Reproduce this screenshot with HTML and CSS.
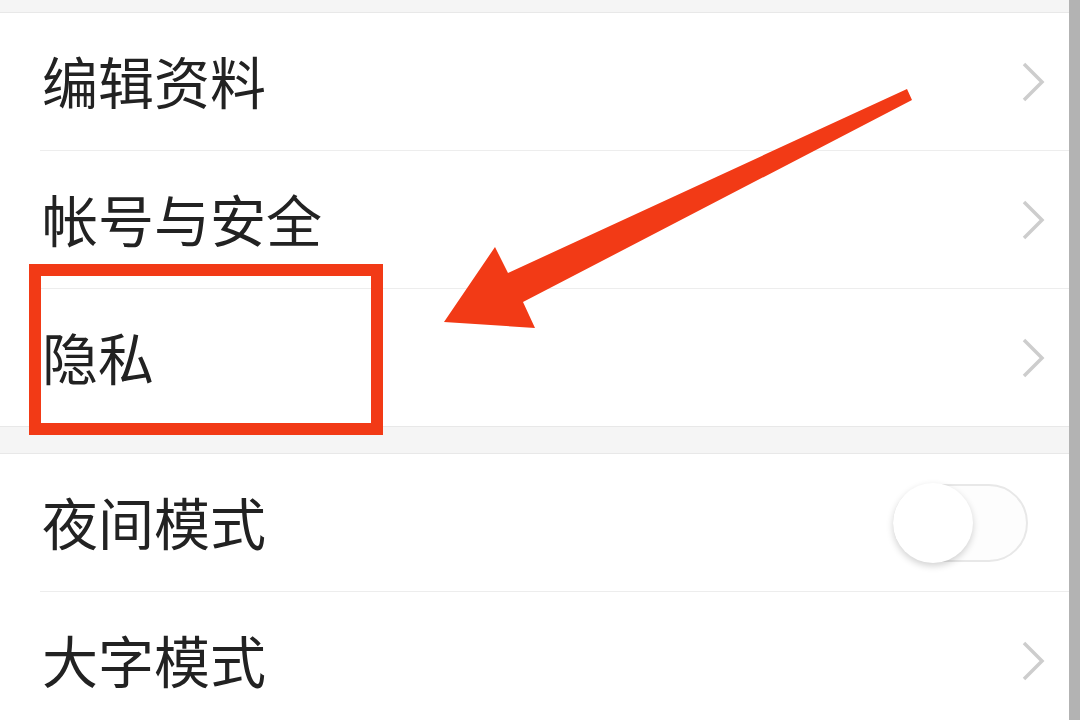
FILE: index.html
```html
<!DOCTYPE html>
<html lang="zh-CN">

<head>
    <meta charset="UTF-8">
    <meta name="viewport" content="width=device-width, initial-scale=1.0">
    <title>设置</title>
    <link rel="stylesheet" href="styles.css">
</head>

<body>
    <div id="screen">
        <div class="page">
            <div class="top-gap"></div>
            <div class="group">
                <div class="row">
                    <span class="label">编辑资料</span>
                    <svg class="chevron" viewBox="0 0 24 40"><polyline points="3,2 21,20 3,38" /></svg>
                </div>
                <div class="row">
                    <span class="label">帐号与安全</span>
                    <svg class="chevron" viewBox="0 0 24 40"><polyline points="3,2 21,20 3,38" /></svg>
                </div>
                <div class="row">
                    <span class="label">隐私</span>
                    <svg class="chevron" viewBox="0 0 24 40"><polyline points="3,2 21,20 3,38" /></svg>
                </div>
            </div>
            <div class="section-gap"></div>
            <div class="group">
                <div class="row">
                    <span class="label">夜间模式</span>
                    <span class="switch"><span class="knob"></span></span>
                </div>
                <div class="row">
                    <span class="label">大字模式</span>
                    <svg class="chevron" viewBox="0 0 24 40"><polyline points="3,2 21,20 3,38" /></svg>
                </div>
            </div>
        </div>
        <div class="scroll-strip"></div>

        <!-- 标注：红框 + 箭头 -->
        <div class="mark-box"></div>
        <svg class="mark-arrow" viewBox="0 0 1080 720">
            <polygon points="907,89 912,100 523,302 535,328 444,322 495,247 508,273" />
        </svg>
    </div>
</body>

</html>
```

FILE: styles.css
```css
* {
    margin: 0;
    padding: 0;
}

body {
    background: #f5f5f5;
    font-family: "Noto Sans CJK SC", "Noto Sans", sans-serif;
    color: #222;
}

#screen {
    width: 1080px;
    height: 720px;
    display: flex;
    position: relative;
    overflow: hidden;
}

.page {
    flex: 1;
    background: #f5f5f5;
}

.top-gap {
    height: 12px;
}

.section-gap {
    height: 26px;
}

.group {
    background: #fff;
    border-top: 1px solid #e8e8e8;
    border-bottom: 1px solid #e8e8e8;
}

.row {
    height: 137px;
    margin-left: 40px;
    padding-right: 24px;
    display: flex;
    align-items: center;
    justify-content: space-between;
    border-bottom: 1px solid #ededed;
}

.row:last-child {
    border-bottom: none;
}

.label {
    font-size: 56px;
    line-height: 1;
    margin-left: 2px;
    padding-bottom: 4px;
}

.chevron {
    width: 24px;
    height: 40px;
}

.chevron polyline {
    fill: none;
    stroke: #cdcdcd;
    stroke-width: 3.5;
}

.switch {
    width: 135px;
    height: 78px;
    margin-right: 17px;
    border: 2px solid #e8e8e8;
    border-radius: 40px;
    box-sizing: border-box;
    background: #fdfdfd;
    position: relative;
}

.knob {
    width: 80px;
    height: 80px;
    border-radius: 50%;
    background: #fff;
    box-shadow: 0 3px 7px rgba(0, 0, 0, 0.18);
    position: absolute;
    left: -2px;
    top: -3px;
}

.scroll-strip {
    width: 11px;
    background: #b3b3b3;
}

.mark-box {
    position: absolute;
    left: 29px;
    top: 264px;
    width: 354px;
    height: 171px;
    border: 12px solid #f23a16;
    box-sizing: border-box;
}

.mark-arrow {
    position: absolute;
    left: 0;
    top: 0;
    width: 1080px;
    height: 720px;
}

.mark-arrow polygon {
    fill: #f23a16;
}
```
